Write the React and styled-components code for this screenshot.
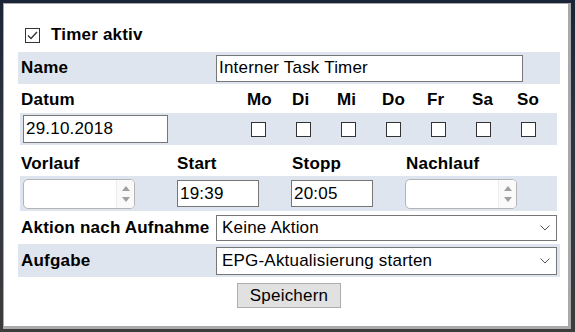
import React from 'react'
import styled, { createGlobalStyle } from 'styled-components'

const GlobalStyle = createGlobalStyle`
    html, body {
        margin: 0;
        padding: 0;
    }
    body {
        font-family: "Liberation Sans", Arial, sans-serif;
    }
`

const font = `17px "Liberation Sans", Arial, sans-serif`

const Page = styled.div`
    width: 575px;
    height: 332px;
    box-sizing: border-box;
    padding: 3px 4px 3px 3px;
    background: linear-gradient(#1b2436 0%, #2e3440 40%, #3c3c3c 100%);
`

const Dialog = styled.div`
    height: 100%;
    box-sizing: border-box;
    background: #fff;
    border: 1px solid #a9a9a9;
    border-right-width: 3px;
    border-bottom-width: 3px;
    padding: 18px 8px 0 14px;
    font: ${font};
    letter-spacing: 0.2px;
    color: #000;
`

const TitleRow = styled.div`
    display: flex;
    align-items: center;
    height: 26px;
    padding-left: 7px;
    gap: 11px;
    font-weight: 700;
`

const Box = styled.span`
    display: inline-flex;
    align-items: center;
    justify-content: center;
    width: 15px;
    height: 15px;
    box-sizing: border-box;
    border: 1px solid #333;
    background: #fff;
    margin-left: ${p => p.$offset || 0}px;
`

const FieldRow = styled.div`
    display: grid;
    grid-template-columns: 198px 1fr;
    align-items: center;
    height: ${p => p.$height}px;
    margin-top: ${p => p.$gap || 0}px;
    background: ${p => (p.$shaded ? '#dfe5ef' : 'transparent')};
`

const Label = styled.div`
    font-weight: 700;
    padding-left: ${p => p.$pad ?? 3}px;
    line-height: 18px;
    white-space: nowrap;
`

const TextInput = styled.input`
    box-sizing: border-box;
    width: ${p => p.$width}px;
    height: ${p => p.$height || 27}px;
    margin-left: ${p => p.$offset || 0}px;
    border: 1px solid #767676;
    padding: 0 2px;
    font: ${font};
    letter-spacing: 0.2px;
    color: #000;
    background: #fff;
    outline: none;
`

const Grid = styled.div`
    display: grid;
    grid-template-columns: ${p => p.$cols};
    align-items: ${p => (p.$head ? 'end' : 'center')};
    height: ${p => p.$height}px;
    margin: ${p => p.$gap || 0}px 3px 0 2px;
    padding-bottom: ${p => (p.$head ? 3 : 0)}px;
    box-sizing: border-box;
    background: ${p => (p.$shaded ? '#dfe5ef' : 'transparent')};
`

const Spin = styled.div`
    display: flex;
    width: 112px;
    height: 30px;
    margin-left: ${p => p.$offset || 0}px;
    box-sizing: border-box;
    border: 1px solid #b4b4b4;
    border-radius: 5px;
    background: #fff;
    overflow: hidden;
`

const SpinField = styled.div`
    flex: 1;
`

const SpinArrows = styled.div`
    display: flex;
    flex-direction: column;
    justify-content: center;
    align-items: center;
    gap: 6px;
    width: 17px;
    border-left: 1px solid #ececec;
    background: #fafafa;
`

const Select = styled.div`
    display: flex;
    align-items: center;
    justify-content: space-between;
    width: 341px;
    height: ${p => p.$height}px;
    box-sizing: border-box;
    border: 1px solid #767676;
    padding: 0 6px 0 5px;
    background: #fff;
`

const ButtonRow = styled.div`
    display: flex;
    justify-content: center;
    margin-top: 6px;
`

const Button = styled.button`
    height: 25px;
    width: 104px;
    border: 1px solid #adadad;
    background: #e1e1e1;
    font: ${font};
    letter-spacing: 0.2px;
    color: #000;
    padding: 0;
`

const Check = () => (
    <svg width="11" height="9" viewBox="0 0 11 9">
        <path d="M1 4.5 L4 7.5 L10 1" fill="none" stroke="#333" strokeWidth="1.4" />
    </svg>
)

const Chevron = () => (
    <svg width="10" height="6" viewBox="0 0 10 6">
        <path d="M0.5 0.5 L5 5 L9.5 0.5" fill="none" stroke="#555" strokeWidth="1" />
    </svg>
)

const Tri = ({ down }) => (
    <svg width="8" height="5" viewBox="0 0 8 5">
        <path d={down ? 'M0 0 H8 L4 5 Z' : 'M0 5 H8 L4 0 Z'} fill="#a0a0a0" />
    </svg>
)

const SpinBox = ({ offset }) => (
    <Spin $offset={offset}>
        <SpinField />
        <SpinArrows>
            <Tri />
            <Tri down />
        </SpinArrows>
    </Spin>
)

const days = ['Mo', 'Di', 'Mi', 'Do', 'Fr', 'Sa', 'So']
const dayCols = '225px repeat(6, 45px) 1fr'
const timeCols = '157px 114px 114px 1fr'

export default function App() {
    return (
        <Page>
            <GlobalStyle />
            <Dialog>
                <TitleRow>
                    <Box><Check /></Box>
                    <span>Timer aktiv</span>
                </TitleRow>

                <FieldRow $height={32} $gap={4} $shaded>
                    <Label>Name</Label>
                    <TextInput $width={307} $height={27} defaultValue="Interner Task Timer" />
                </FieldRow>

                <Grid $cols={dayCols} $height={28} $head>
                    <Label $pad={1}>Datum</Label>
                    {days.map(d => <Label key={d} $pad={2}>{d}</Label>)}
                </Grid>
                <Grid $cols={dayCols} $height={32} $gap={1} $shaded>
                    <TextInput $width={145} $height={28} $offset={3} defaultValue="29.10.2018" />
                    {days.map(d => <Box key={d} $offset={6} />)}
                </Grid>

                <Grid $cols={timeCols} $height={31} $head>
                    <Label $pad={1}>Vorlauf</Label>
                    <Label $pad={0}>Start</Label>
                    <Label $pad={1}>Stopp</Label>
                    <Label $pad={1}>Nachlauf</Label>
                </Grid>
                <Grid $cols={timeCols} $height={35} $shaded>
                    <SpinBox offset={3} />
                    <TextInput $width={82} $height={27} defaultValue="19:39" />
                    <TextInput $width={82} $height={27} defaultValue="20:05" />
                    <SpinBox offset={0} />
                </Grid>

                <FieldRow $height={31} $gap={1}>
                    <Label>Aktion nach Aufnahme</Label>
                    <Select $height={26}>
                        <span>Keine Aktion</span>
                        <Chevron />
                    </Select>
                </FieldRow>
                <FieldRow $height={33} $gap={1} $shaded>
                    <Label>Aufgabe</Label>
                    <Select $height={28}>
                        <span>EPG-Aktualisierung starten</span>
                        <Chevron />
                    </Select>
                </FieldRow>

                <ButtonRow>
                    <Button>Speichern</Button>
                </ButtonRow>
            </Dialog>
        </Page>
    )
}
